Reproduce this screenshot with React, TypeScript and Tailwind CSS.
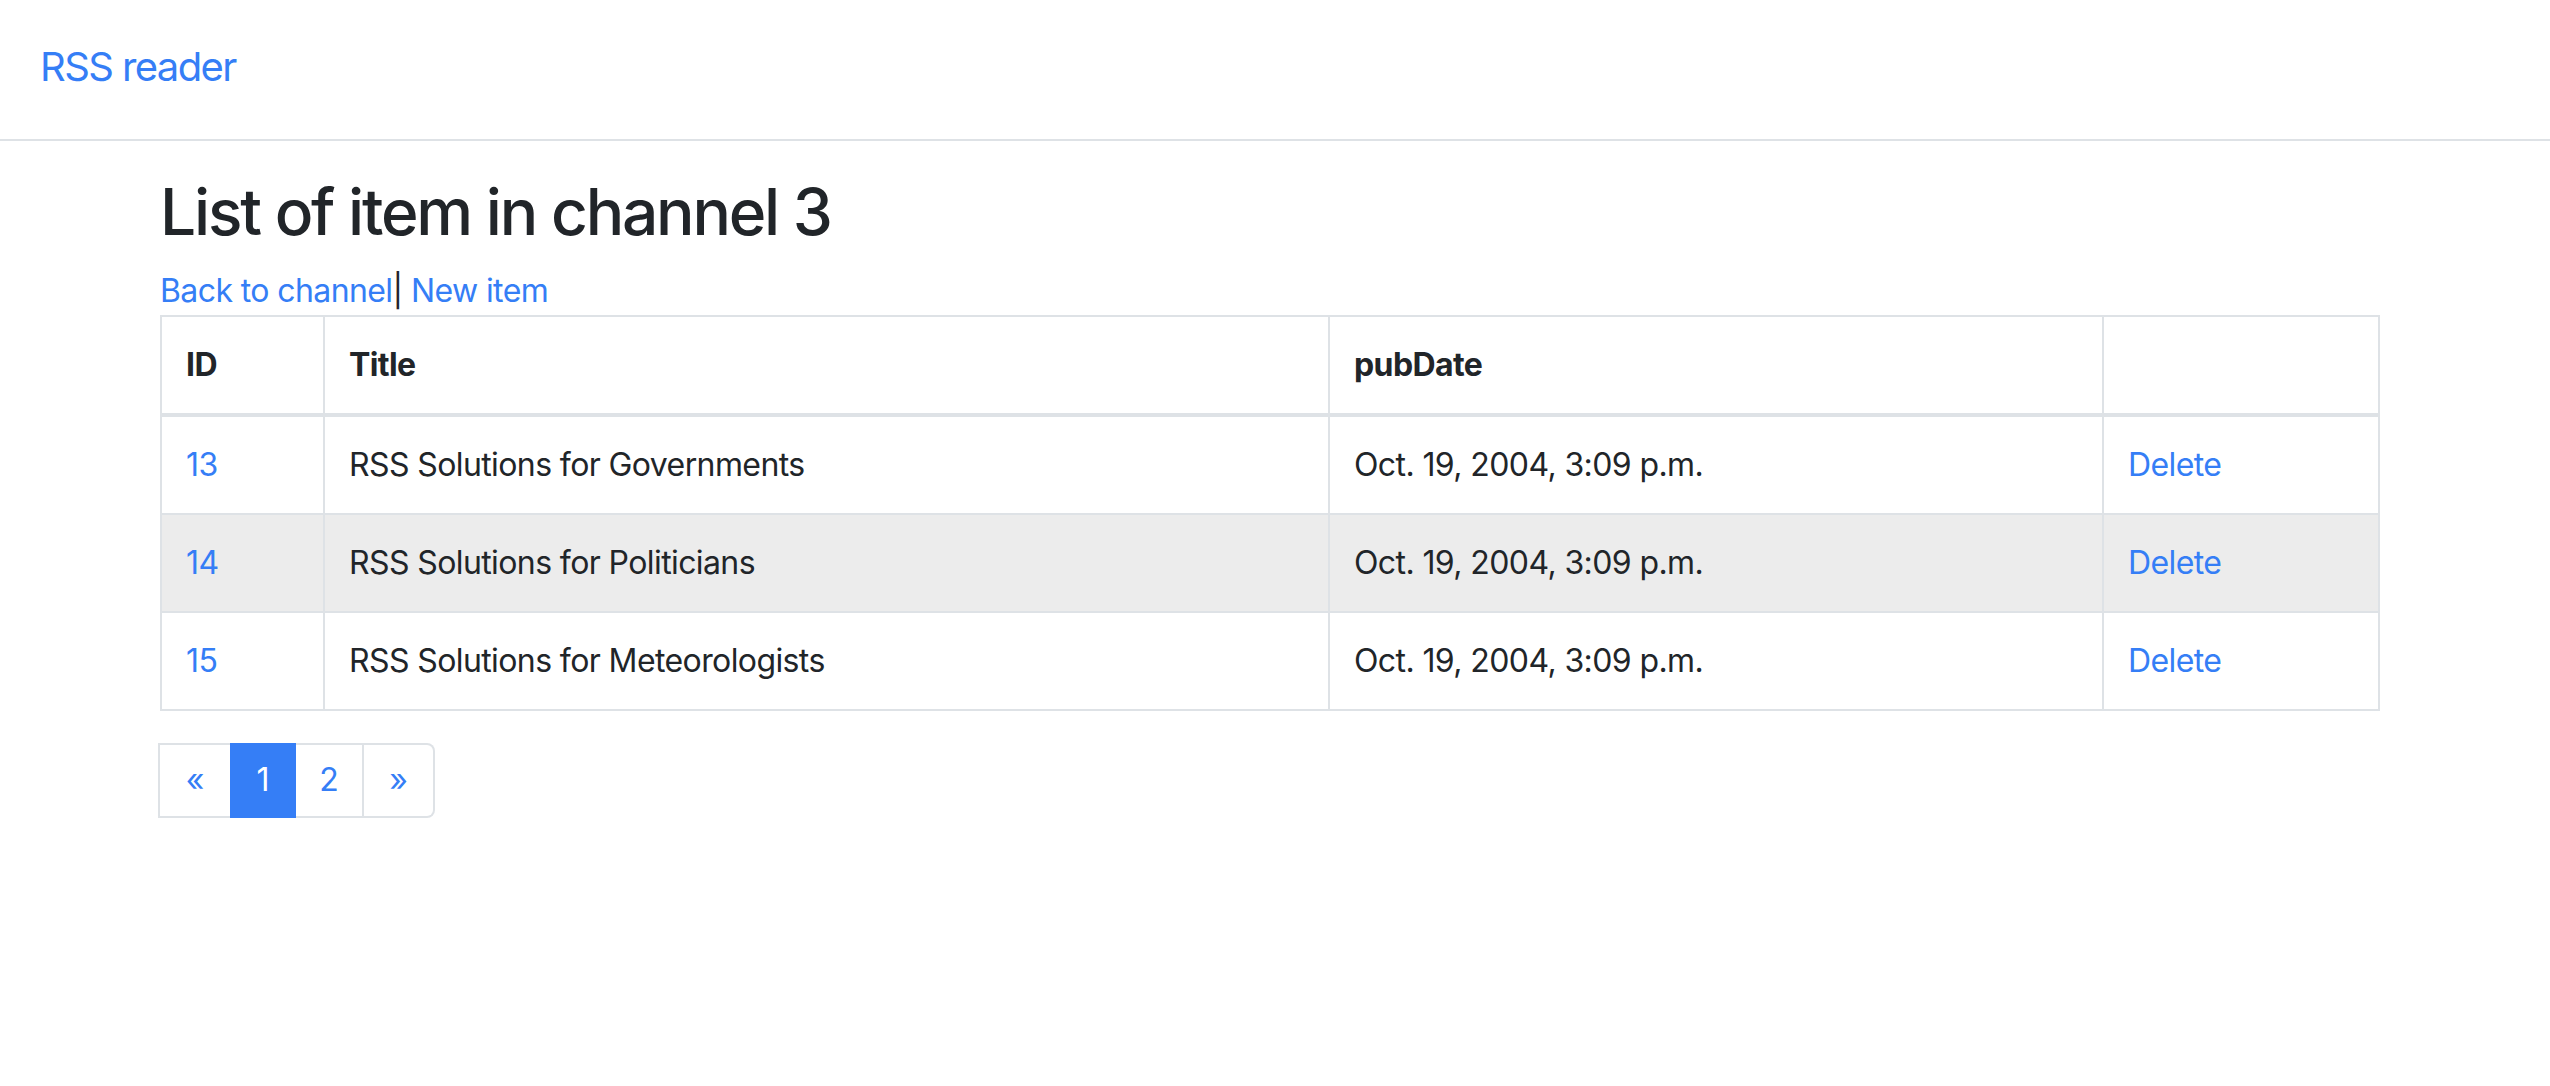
import React from 'react';

const items = [
  { id: 13, title: 'RSS Solutions for Governments', date: 'Oct. 19, 2004, 3:09 p.m.' },
  { id: 14, title: 'RSS Solutions for Politicians', date: 'Oct. 19, 2004, 3:09 p.m.', hover: true },
  { id: 15, title: 'RSS Solutions for Meteorologists', date: 'Oct. 19, 2004, 3:09 p.m.' },
];

const cell = 'border-2 border-[#dee2e6] px-[24px] py-[24px] leading-[48px] text-left align-top';

export default function App() {
  return (
    <div className="min-h-[1086px] bg-white text-[#212529] font-['Inter','Liberation_Sans',sans-serif] text-[32px] tracking-[-0.6px]">
      <nav className="h-[141px] border-b-2 border-[#dee2e6] pl-[40px] pt-[37px]">
        <a href="#" className="block text-[40px] leading-[60px] tracking-[-1.6px] text-[#357ef6]">
          RSS reader
        </a>
      </nav>

      <main className="ml-[160px] w-[2220px]">
        <h2 className="mt-[33px] mb-[16px] text-[64px] leading-[76.8px] font-medium tracking-[-2.2px]">
          List of item in channel 3
        </h2>
        <div className="leading-[48px]">
          <a href="#" className="text-[#357ef6]">Back to channel</a>|{' '}
          <a href="#" className="text-[#357ef6]">New item</a>
        </div>

        <table className="w-[2220px] table-fixed border-collapse border-2 border-[#dee2e6]">
          <colgroup>
            <col className="w-[163px]" />
            <col className="w-[1005px]" />
            <col className="w-[774px]" />
            <col />
          </colgroup>
          <thead>
            <tr>
              <th className={`${cell} border-b-4 font-bold`}>ID</th>
              <th className={`${cell} border-b-4 font-bold`}>Title</th>
              <th className={`${cell} border-b-4 font-bold`}>pubDate</th>
              <th className={`${cell} border-b-4`}></th>
            </tr>
          </thead>
          <tbody>
            {items.map((it) => (
              <tr key={it.id} className={it.hover ? 'bg-[#ececec]' : ''}>
                <td className={cell}>
                  <a href="#" className="text-[#357ef6]">{it.id}</a>
                </td>
                <td className={cell}>{it.title}</td>
                <td className={cell}>{it.date}</td>
                <td className={cell}>
                  <a href="#" className="text-[#357ef6]">Delete</a>
                </td>
              </tr>
            ))}
          </tbody>
        </table>

        {/* pagination */}
        <ul className="mt-[32px] -ml-[2px] flex h-[75px] text-[#357ef6] leading-[40px] tracking-normal">
          <li className="flex w-[72px] items-center justify-center border-y-2 border-l-2 border-[#dee2e6]">«</li>
          <li className="flex w-[66px] items-center justify-center bg-[#357ef6] text-white">1</li>
          <li className="flex w-[68px] items-center justify-center border-y-2 border-r-2 border-[#dee2e6]">2</li>
          <li className="flex w-[71px] items-center justify-center rounded-r-[8px] border-y-2 border-r-2 border-[#dee2e6]">»</li>
        </ul>
      </main>
    </div>
  );
}
